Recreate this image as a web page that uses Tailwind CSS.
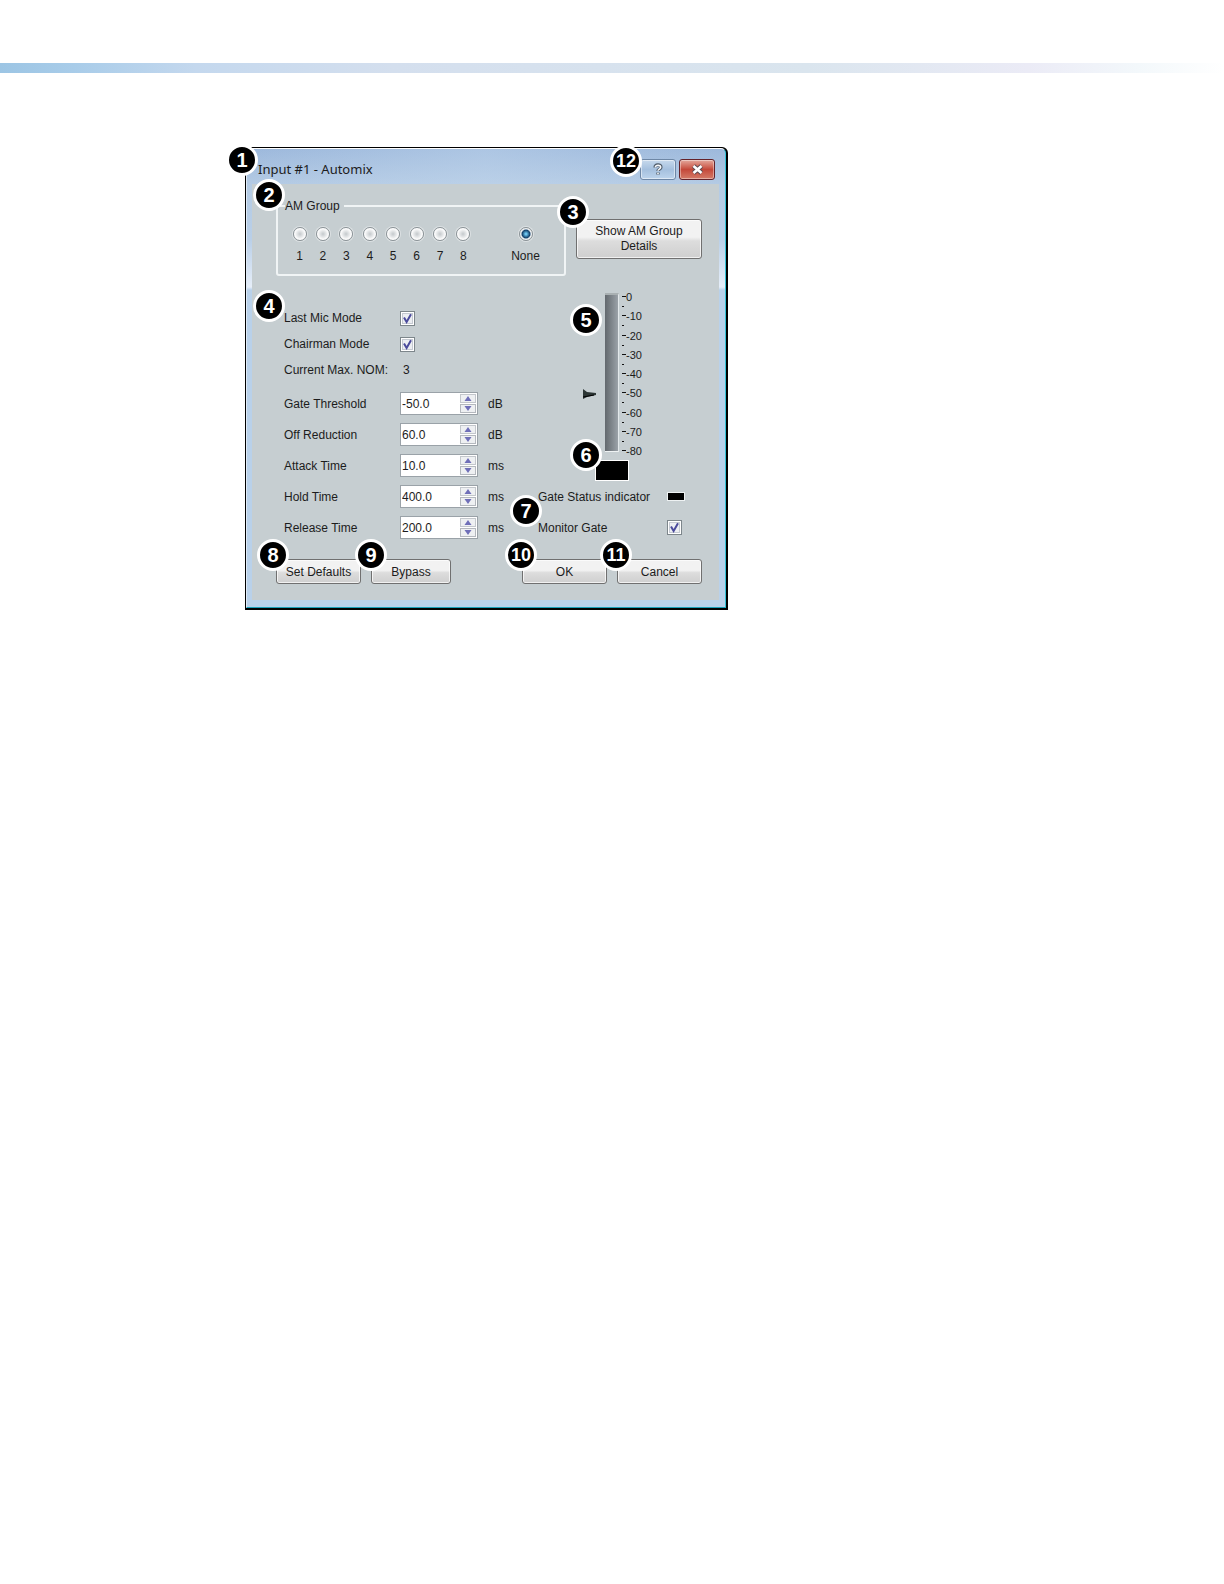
<!DOCTYPE html>
<html lang="en">
<head>
<meta charset="utf-8">
<meta name="viewport" content="width=device-width, initial-scale=1">
<title>Input #1 - Automix</title>
<script src="https://cdn.jsdelivr.net/npm/@tailwindcss/browser@4"></script>
</head>
<body class="min-h-screen bg-white pt-[63px] font-['Liberation_Sans',Arial,sans-serif] text-[12px] leading-4 text-[#1c1c1c]">
<svg class="hidden" aria-hidden="true">
  <symbol id="tick" viewBox="0 0 15 15"><path d="M4 6.5 6.6 11 11 3.2" fill="none" stroke="#4b4b9c" stroke-width="2"/></symbol>
  <symbol id="up" viewBox="0 0 8 5"><path d="M4 0 7.5 5h-7z" fill="#6f6fb8"/></symbol>
  <symbol id="down" viewBox="0 0 8 5"><path d="M4 5 7.5 0h-7z" fill="#6f6fb8"/></symbol>
</svg>
<div class="h-[10px] bg-[linear-gradient(to_right,#9cc5e4,#a8cce9_6%,#c4d8ee_16%,#d4dfee_32%,#dae5ee_66%,#ebebf6_84%,#f3f8fb_93%,#ffffff)]"></div>

<main class="relative mt-[74px] ml-[245px] w-[483px]">
  <section class="rounded-t-md border-t border-r-2 border-b-2 border-l border-black bg-black" aria-labelledby="title">
    <div class="rounded-t-[5px] border border-t-white border-r-[#35c3d8] border-b-[#1ba0b8] border-l-[#dfeaf6] bg-[linear-gradient(to_bottom,#9db9dc,#b4cbe4_36px,#b9cfe8_90px,#e6eef9_138px,#b9d1ea_141px)] pr-[6px] pb-[7px] pl-[5px]">
      <header class="flex h-[35px] items-start justify-between bg-linear-to-r from-transparent via-[#c5d9ee]/40 to-transparent pt-[10px] pr-1 pl-[6px]">
        <h1 id="title" class="pt-[2px] font-['Noto_Sans','Open_Sans',sans-serif] text-[13px] leading-4">Input #1 - Automix</h1>
        <div class="flex gap-[3px]">
          <button aria-label="Help" class="flex h-[21px] w-9 items-center justify-center rounded-[3px] border border-[#6e87a6] bg-linear-to-b from-[#c7d9ec] via-[#a5c0de] to-[#bdd4ec] shadow-[inset_0_0_0_1px_#ffffff80]">
            <svg class="h-[13px] w-[10px]" viewBox="0 0 12 15" fill="none"><path d="M2.5 5.2C2.5 1 9.5 1 9.5 4.8 9.5 7 6 7 6 9.3M6 11v2.5" stroke="#4e5a68" stroke-width="4"/><path d="M2.8 5C3.2 1.6 9.2 1.6 9.2 4.8 9.2 7 6 7 6 9M6 11.3v2" stroke="#f5f7fa" stroke-width="2"/></svg>
          </button>
          <button aria-label="Close" class="flex h-[21px] w-9 items-center justify-center rounded-[3px] border border-[#64222a] bg-linear-to-b from-[#e3a79c] via-[#c4483a] to-[#d47a68] shadow-[inset_0_0_0_1px_#ffffff66]">
            <svg class="h-[11px] w-[13px]" viewBox="0 0 13 11"><path d="M2.5 2l8 7M10.500 2l-8 7" stroke="#5a4a52" stroke-width="4.500"/><path d="M2.5 2l8 7M10.500 2l-8 7" stroke="#fff" stroke-width="2.600"/></svg>
          </button>
        </div>
      </header>

      <form class="bg-[#c6ced1] pt-[13px] pr-[17px] pb-4 pl-6">
        <div class="flex items-start gap-[10px]">
          <fieldset class="h-[79px] w-[290px] rounded-[3px] border-2 border-[#f0f4f5] pl-[15px]">
            <legend class="-ml-2 h-[18px] pr-1 leading-[18px]">AM Group</legend>
            <div class="flex pt-3">
              <div class="flex w-[177px] justify-between">
                <label class="flex w-[13px] flex-col items-center gap-[7px]"><input type="radio" name="g" class="size-[14px] shrink-0 appearance-none rounded-full border border-[#8a9296] bg-radial from-[#c4c9cc] to-white to-65% ring-1 ring-white/40">1</label>
                <label class="flex w-[13px] flex-col items-center gap-[7px]"><input type="radio" name="g" class="size-[14px] shrink-0 appearance-none rounded-full border border-[#8a9296] bg-radial from-[#c4c9cc] to-white to-65% ring-1 ring-white/40">2</label>
                <label class="flex w-[13px] flex-col items-center gap-[7px]"><input type="radio" name="g" class="size-[14px] shrink-0 appearance-none rounded-full border border-[#8a9296] bg-radial from-[#c4c9cc] to-white to-65% ring-1 ring-white/40">3</label>
                <label class="flex w-[13px] flex-col items-center gap-[7px]"><input type="radio" name="g" class="size-[14px] shrink-0 appearance-none rounded-full border border-[#8a9296] bg-radial from-[#c4c9cc] to-white to-65% ring-1 ring-white/40">4</label>
                <label class="flex w-[13px] flex-col items-center gap-[7px]"><input type="radio" name="g" class="size-[14px] shrink-0 appearance-none rounded-full border border-[#8a9296] bg-radial from-[#c4c9cc] to-white to-65% ring-1 ring-white/40">5</label>
                <label class="flex w-[13px] flex-col items-center gap-[7px]"><input type="radio" name="g" class="size-[14px] shrink-0 appearance-none rounded-full border border-[#8a9296] bg-radial from-[#c4c9cc] to-white to-65% ring-1 ring-white/40">6</label>
                <label class="flex w-[13px] flex-col items-center gap-[7px]"><input type="radio" name="g" class="size-[14px] shrink-0 appearance-none rounded-full border border-[#8a9296] bg-radial from-[#c4c9cc] to-white to-65% ring-1 ring-white/40">7</label>
                <label class="flex w-[13px] flex-col items-center gap-[7px]"><input type="radio" name="g" class="size-[14px] shrink-0 appearance-none rounded-full border border-[#8a9296] bg-radial from-[#c4c9cc] to-white to-65% ring-1 ring-white/40">8</label>
              </div>
              <label class="ml-10 flex w-[31px] flex-col items-center gap-[7px]"><input type="radio" name="g" checked class="size-[14px] appearance-none rounded-full border border-[#8a9296] bg-radial from-[#6cc4ee] from-10% via-[#12426c] via-45% to-[#eef1f2] to-60% ring-1 ring-white/40">None</label>
            </div>
          </fieldset>
          <button type="button" class="mt-[22px] h-10 w-[126px] rounded-[3px] border border-[#707070] bg-linear-to-b from-[#f2f2f2] from-45% via-[#dddddd] via-55% to-[#cfcfcf] px-3 leading-[15px] shadow-[inset_0_0_0_1px_#ffffffb3]">Show AM Group<br>Details</button>
        </div>

        <div class="mt-[17px] flex justify-between pl-2">
          <div class="pt-3">
            <div class="grid auto-rows-[26px] grid-cols-[116px_auto] items-center justify-start">
              <label for="last">Last Mic Mode</label>
              <span class="relative size-[15px]"><input id="last" type="checkbox" checked class="block size-[15px] appearance-none border border-[#7d868b] bg-[#eceef2] shadow-[inset_0_0_0_1px_#fff,inset_0_0_0_2px_#c5cad2]"><svg class="pointer-events-none absolute inset-0 size-[15px]"><use href="#tick"/></svg></span>
              <label for="chair">Chairman Mode</label>
              <span class="relative size-[15px]"><input id="chair" type="checkbox" checked class="block size-[15px] appearance-none border border-[#7d868b] bg-[#eceef2] shadow-[inset_0_0_0_1px_#fff,inset_0_0_0_2px_#c5cad2]"><svg class="pointer-events-none absolute inset-0 size-[15px]"><use href="#tick"/></svg></span>
              <span>Current Max. NOM:</span><output class="pl-[3px]">3</output>
            </div>
            <div class="mt-[5px] grid auto-rows-[31px] grid-cols-[116px_78px_auto] items-center justify-start">
              <label for="gt">Gate Threshold</label>
              <span class="flex h-[23px] border border-[#9aa2a8] bg-white p-px"><input id="gt" value="-50.0" class="min-w-0 flex-1 outline-none"><span class="flex w-4 shrink-0 flex-col gap-px"><button type="button" aria-label="Increase" class="flex flex-1 items-center justify-center border border-[#c3c7cc] bg-[#eef0f2]"><svg class="h-[5px] w-2"><use href="#up"/></svg></button><button type="button" aria-label="Decrease" class="flex flex-1 items-center justify-center border border-[#b4b8be] bg-[#eef0f2]"><svg class="h-[5px] w-2"><use href="#down"/></svg></button></span></span>
              <span class="pl-[10px]">dB</span>
              <label for="or">Off Reduction</label>
              <span class="flex h-[23px] border border-[#9aa2a8] bg-white p-px"><input id="or" value="60.0" class="min-w-0 flex-1 outline-none"><span class="flex w-4 shrink-0 flex-col gap-px"><button type="button" aria-label="Increase" class="flex flex-1 items-center justify-center border border-[#c3c7cc] bg-[#eef0f2]"><svg class="h-[5px] w-2"><use href="#up"/></svg></button><button type="button" aria-label="Decrease" class="flex flex-1 items-center justify-center border border-[#b4b8be] bg-[#eef0f2]"><svg class="h-[5px] w-2"><use href="#down"/></svg></button></span></span>
              <span class="pl-[10px]">dB</span>
              <label for="at">Attack Time</label>
              <span class="flex h-[23px] border border-[#9aa2a8] bg-white p-px"><input id="at" value="10.0" class="min-w-0 flex-1 outline-none"><span class="flex w-4 shrink-0 flex-col gap-px"><button type="button" aria-label="Increase" class="flex flex-1 items-center justify-center border border-[#c3c7cc] bg-[#eef0f2]"><svg class="h-[5px] w-2"><use href="#up"/></svg></button><button type="button" aria-label="Decrease" class="flex flex-1 items-center justify-center border border-[#b4b8be] bg-[#eef0f2]"><svg class="h-[5px] w-2"><use href="#down"/></svg></button></span></span>
              <span class="pl-[10px]">ms</span>
              <label for="ht">Hold Time</label>
              <span class="flex h-[23px] border border-[#9aa2a8] bg-white p-px"><input id="ht" value="400.0" class="min-w-0 flex-1 outline-none"><span class="flex w-4 shrink-0 flex-col gap-px"><button type="button" aria-label="Increase" class="flex flex-1 items-center justify-center border border-[#c3c7cc] bg-[#eef0f2]"><svg class="h-[5px] w-2"><use href="#up"/></svg></button><button type="button" aria-label="Decrease" class="flex flex-1 items-center justify-center border border-[#b4b8be] bg-[#eef0f2]"><svg class="h-[5px] w-2"><use href="#down"/></svg></button></span></span>
              <span class="pl-[10px]">ms</span>
              <label for="rt">Release Time</label>
              <span class="flex h-[23px] border border-[#9aa2a8] bg-white p-px"><input id="rt" value="200.0" class="min-w-0 flex-1 outline-none"><span class="flex w-4 shrink-0 flex-col gap-px"><button type="button" aria-label="Increase" class="flex flex-1 items-center justify-center border border-[#c3c7cc] bg-[#eef0f2]"><svg class="h-[5px] w-2"><use href="#up"/></svg></button><button type="button" aria-label="Decrease" class="flex flex-1 items-center justify-center border border-[#b4b8be] bg-[#eef0f2]"><svg class="h-[5px] w-2"><use href="#down"/></svg></button></span></span>
              <span class="pl-[10px]">ms</span>
            </div>
          </div>

          <div class="w-[164px]">
            <div class="flex h-[159px] pl-[44px]">
              <svg class="mt-[96px] h-[10px] w-[14px]" viewBox="0 0 14 10"><path d="M1 0 5 3 14 4v2L5 8 1 10z" fill="#2b3534"/><path d="M1 8 12 6" stroke="#000"/></svg>
              <div class="ml-[9px] w-[14px] border-t-2 border-r border-b border-t-[#a9b0b2] border-r-[#e3e8ea] border-b-[#eef2f3] bg-linear-to-r from-[#63696e] to-[#9ba2a8]"></div>
              <svg class="ml-[3px] h-[159px] w-1 shrink-0" viewBox="0 0 4 159" fill="none" stroke="#111"><path d="M0 3.5h4M0 22.5h4M0 42.5h4M0 61.5h4M0 80.5h4M0 99.5h4M0 119.5h4M0 138.5h4M0 157.5h4"/><path d="M0 13.5h2M0 32.5h2M0 52.5h2M0 71.5h2M0 90.5h2M0 109.5h2M0 129.5h2M0 148.5h2"/></svg>
              <ol class="-mt-px flex h-[164px] flex-col justify-between text-[11px] leading-[10px]">
                <li>0</li><li>-10</li><li>-20</li><li>-30</li><li>-40</li><li>-50</li><li>-60</li><li>-70</li><li>-80</li>
              </ol>
            </div>
            <div class="mt-2 ml-[57px] h-[21px] w-[34px] border border-white bg-black"></div>
            <div class="grid auto-rows-[31px] grid-cols-[129px_auto] items-center justify-start">
              <span>Gate Status indicator</span><span class="h-[9px] w-[18px] border border-[#eef2f3] bg-black"></span>
              <label for="mon">Monitor Gate</label>
              <span class="relative size-[15px]"><input id="mon" type="checkbox" checked class="block size-[15px] appearance-none border border-[#7d868b] bg-[#eceef2] shadow-[inset_0_0_0_1px_#fff,inset_0_0_0_2px_#c5cad2]"><svg class="pointer-events-none absolute inset-0 size-[15px]"><use href="#tick"/></svg></span>
            </div>
          </div>
        </div>

        <div class="mt-4 flex">
          <button type="button" class="h-[25px] w-[85px] rounded-[3px] border border-[#707070] bg-linear-to-b from-[#f2f2f2] from-45% via-[#dddddd] via-55% to-[#cfcfcf] shadow-[inset_0_0_0_1px_#ffffffb3]">Set Defaults</button>
          <button type="button" class="ml-[10px] h-[25px] w-[80px] rounded-[3px] border border-[#707070] bg-linear-to-b from-[#f2f2f2] from-45% via-[#dddddd] via-55% to-[#cfcfcf] shadow-[inset_0_0_0_1px_#ffffffb3]">Bypass</button>
          <button class="ml-auto h-[25px] w-[85px] rounded-[3px] border border-[#707070] bg-linear-to-b from-[#f2f2f2] from-45% via-[#dddddd] via-55% to-[#cfcfcf] shadow-[inset_0_0_0_1px_#ffffffb3]">OK</button>
          <button type="button" class="ml-[10px] h-[25px] w-[85px] rounded-[3px] border border-[#707070] bg-linear-to-b from-[#f2f2f2] from-45% via-[#dddddd] via-55% to-[#cfcfcf] shadow-[inset_0_0_0_1px_#ffffffb3]">Cancel</button>
        </div>
      </form>
    </div>
  </section>

  <!-- numbered callouts -->
  <div class="pointer-events-none text-[20px] leading-none font-bold text-white">
    <span class="absolute top-[-3px] left-[-19px] flex size-8 items-center justify-center rounded-full border-3 border-white bg-black">1</span>
    <span class="absolute top-[32px] left-[8px] flex size-8 items-center justify-center rounded-full border-3 border-white bg-black">2</span>
    <span class="absolute top-[49px] left-[312px] flex size-8 items-center justify-center rounded-full border-3 border-white bg-black">3</span>
    <span class="absolute top-[143px] left-[8px] flex size-8 items-center justify-center rounded-full border-3 border-white bg-black">4</span>
    <span class="absolute top-[157px] left-[325px] flex size-8 items-center justify-center rounded-full border-3 border-white bg-black">5</span>
    <span class="absolute top-[292px] left-[325px] flex size-8 items-center justify-center rounded-full border-3 border-white bg-black">6</span>
    <span class="absolute top-[348px] left-[265px] flex size-8 items-center justify-center rounded-full border-3 border-white bg-black">7</span>
    <span class="absolute top-[392px] left-[12px] flex size-8 items-center justify-center rounded-full border-3 border-white bg-black">8</span>
    <span class="absolute top-[392px] left-[110px] flex size-8 items-center justify-center rounded-full border-3 border-white bg-black">9</span>
    <span class="absolute top-[392px] left-[260px] flex size-8 items-center justify-center rounded-full border-3 border-white bg-black text-[18px]">10</span>
    <span class="absolute top-[392px] left-[355px] flex size-8 items-center justify-center rounded-full border-3 border-white bg-black text-[18px]">11</span>
    <span class="absolute top-[-2px] left-[365px] flex size-8 items-center justify-center rounded-full border-3 border-white bg-black text-[18px]">12</span>
  </div>
</main>
</body>
</html>
